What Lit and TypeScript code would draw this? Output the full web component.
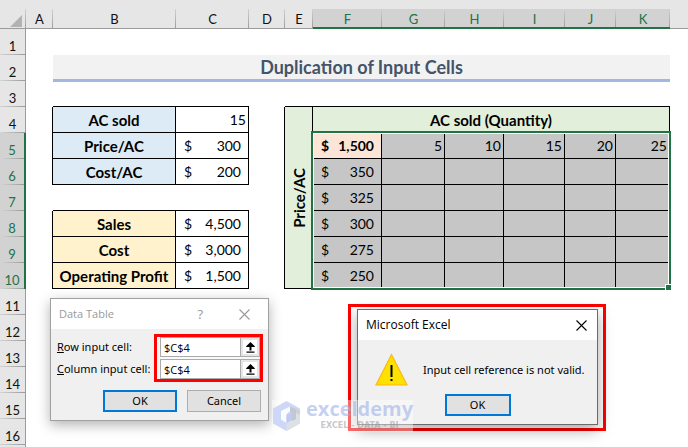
import { LitElement, html, css, svg, nothing } from "lit";
import { customElement, property } from "lit/decorators.js";
import { classMap } from "lit/directives/class-map.js";

type Cell = {
  text?: string;
  money?: boolean;
  fill?: string;
  bold?: boolean;
  align?: string;
  col?: number;
  row?: number;
  box?: boolean;
  title?: boolean;
  turned?: boolean;
};

const COLUMNS = ["A", "B", "C", "D", "E", "F", "G", "H", "I", "J", "K"];
const ROW_COUNT = 16;

const label = (text: string, fill: string): Cell => ({ text, fill, bold: true, box: true });
const money = (text: string, fill = "", bold = false): Cell => ({ text, money: true, fill, bold, box: true });
const right = (text: string, fill = ""): Cell => ({ text, fill, align: "end", box: true });

const CELLS: Record<string, Cell> = {
  B2: { text: "Duplication of Input Cells", col: 10, title: true, bold: true },
  B4: label("AC sold", "blue"),
  C4: right("15"),
  B5: label("Price/AC", "blue"),
  C5: money("300"),
  B6: label("Cost/AC", "blue"),
  C6: money("200"),
  B8: label("Sales", "gold"),
  C8: money("4,500"),
  B9: label("Cost", "gold"),
  C9: money("3,000"),
  B10: label("Operating Profit", "gold"),
  C10: money("1,500"),
  E4: { text: "Price/AC", fill: "green", bold: true, box: true, row: 7, turned: true },
  F4: { text: "AC sold (Quantity)", fill: "green", bold: true, box: true, col: 6 },
  F5: money("1,500", "peach", true),
  F6: money("350", "picked"),
  F7: money("325", "picked"),
  F8: money("300", "picked"),
  F9: money("275", "picked"),
  F10: money("250", "picked"),
};
["5", "10", "15", "20", "25"].forEach((n, i) => {
  const c = "GHIJK"[i];
  CELLS[c + 5] = right(n, "picked");
  for (let r = 6; r <= 10; r++) CELLS[c + r] = right("", "picked");
});

/** Finds the cell that covers a position, merged ranges included. */
function owner(c: number, r: number): string | null {
  for (const [key, cell] of Object.entries(CELLS)) {
    const c0 = COLUMNS.indexOf(key[0]);
    const r0 = Number(key.slice(1));
    if (c >= c0 && c < c0 + (cell.col ?? 1) && r >= r0 && r < r0 + (cell.row ?? 1)) return key;
  }
  return null;
}

const boxed = (c: number, r: number) => {
  const key = owner(c, r);
  return key !== null && !!CELLS[key].box;
};

const cross = html`<svg class="cross" viewBox="0 0 11 11" width="11" height="11" aria-hidden="true">
  <path d="M.5 .5 L10.5 10.5 M10.5 .5 L.5 10.5" fill="none" stroke="currentColor" stroke-width="1.1" />
</svg>`;

const dialogBase = css`
  :host {
    display: block;
    font: 12px/16px "Open Sans", "Noto Sans", sans-serif;
    color: #000;
  }
  .bar {
    display: flex;
    align-items: center;
    height: 30px;
    padding: 0 8px;
    background: #fff;
  }
  .bar h2 {
    flex: 1;
    margin: 0;
    font: inherit;
  }
  button {
    font: inherit;
    color: inherit;
    padding: 0;
    border: 0;
    background: none;
  }
  .cross {
    display: block;
  }
  .push {
    box-sizing: border-box;
    background: #e1e1e1;
    border: 1px solid #adadad;
    height: 22px;
    width: 74px;
    font: 11px/16px "Noto Sans", sans-serif;
  }
  .push.main {
    border: 2px solid #0078d7;
  }
`;

@customElement("sheet-grid")
export class SheetGrid extends LitElement {
  static styles = css`
    :host {
      display: block;
      font: 14px/20px Lato, "Open Sans", sans-serif;
      color: #000;
    }
    table {
      width: 100%;
      table-layout: fixed;
      border-collapse: separate;
      border-spacing: 0;
    }
    .ch { width: 26px; }
    .cA { width: 27px; }
    .cB { width: 123px; }
    .cC { width: 73px; }
    .cD { width: 36px; }
    .cE { width: 28px; }
    .cF { width: 69px; }
    .cG { width: 63px; }
    .cH { width: 59px; }
    .cI { width: 61px; }
    .cJ { width: 51px; }
    .cK { width: 54px; }
    th,
    td {
      box-sizing: border-box;
      padding: 0;
      height: 26px;
      text-align: center;
      white-space: nowrap;
      border: 0 solid #000;
    }
    th {
      font-size: 13px;
      font-weight: 400;
      color: #111;
    }
    thead th {
      height: 20px;
      line-height: 19px;
      box-shadow: inset 0 -1px #9b9b9b;
      background: linear-gradient(#d0d0d0, #9b9b9b) right / 1px 100% no-repeat #e6e6e6;
    }
    thead .rest {
      background: #e6e6e6;
    }
    thead .on {
      color: #217346;
      box-shadow: inset 0 -2px #217346;
      background-color: #d2d2d2;
    }
    .corner svg {
      display: block;
      margin: 3px 0 0 10px;
    }
    tbody th {
      vertical-align: bottom;
      line-height: 18px;
      border-right: 1px solid #9b9b9b;
      background: linear-gradient(to right, #d4d4d4, #9b9b9b) bottom / 100% 1px no-repeat #e6e6e6;
    }
    tbody .on {
      color: #217346;
      border-right: 2px solid #217346;
      background-color: #d2d2d2;
    }
    .lineR { border-right-width: 1px; }
    .lineB { border-bottom-width: 1px; }
    .bold { font-weight: 700; font-size: 15px; }
    .end { text-align: right; padding-right: 2px; }
    .blue { background: #ddebf7; }
    .gold { background: #fff2cc; }
    .green { background: #e2efda; }
    .peach { background: #fce4d6; }
    .picked { background: #c6c6c6; }
    .title {
      font-size: 18px;
      color: #44546a;
      background: #f2f2f2;
      border-bottom: 2px solid #a2b8e1;
      box-shadow: 0 1px #a2b8e1;
    }
    .money {
      display: flex;
      justify-content: space-between;
      padding: 0 7px 0 8px;
      font-size: 14px;
    }
    .turned span {
      display: inline-block;
      vertical-align: middle;
      writing-mode: vertical-rl;
      transform: rotate(180deg);
    }
  `;

  private cell(c: number, r: number) {
    const key = COLUMNS[c] + r;
    const own = owner(c, r);
    if (own !== null && own !== key) return nothing;
    const cell = CELLS[key] ?? {};
    const lastC = c + (cell.col ?? 1) - 1;
    const lastR = r + (cell.row ?? 1) - 1;
    const classes = {
      lineR: !!cell.box || boxed(lastC + 1, r),
      lineB: !cell.title && (!!cell.box || boxed(c, lastR + 1)),
      bold: !!cell.bold,
      end: cell.align === "end",
      title: !!cell.title,
      turned: !!cell.turned,
      ...(cell.fill ? { [cell.fill]: true } : {}),
    };
    const body = cell.money
      ? html`<div class="money"><span>$</span><span>${cell.text}</span></div>`
      : cell.turned
        ? html`<span>${cell.text}</span>`
        : cell.text ?? "";
    return html`<td class=${classMap(classes)} colspan=${cell.col ?? 1} rowspan=${cell.row ?? 1}>${body}</td>`;
  }

  render() {
    const rows = Array.from({ length: ROW_COUNT }, (_, i) => i + 1);
    return html`<table>
      <colgroup>
        <col class="ch" />
        ${COLUMNS.map((c) => html`<col class="c${c}" />`)}
        <col />
      </colgroup>
      <thead>
        <tr>
          <th class="corner">
            <svg width="12" height="12" viewBox="0 0 12 12" aria-hidden="true">
              <path d="M12 0V12H0Z" fill="#b2b2b2" />
            </svg>
          </th>
          ${COLUMNS.map((c) => html`<th scope="col" class=${c >= "F" ? "on" : ""}>${c}</th>`)}
          <th class="rest"></th>
        </tr>
      </thead>
      <tbody>
        ${rows.map(
          (r) => html`<tr>
            <th scope="row" class=${r >= 5 && r <= 10 ? "on" : ""}>${r}</th>
            ${COLUMNS.map((_, c) => this.cell(c, r))}
            <td></td>
          </tr>`
        )}
        <tr>
          <th></th>
          <td colspan="12"></td>
        </tr>
      </tbody>
    </table>`;
  }
}

@customElement("data-table-dialog")
export class DataTableDialog extends LitElement {
  static styles = [
    dialogBase,
    css`
      :host {
        border: 1px solid #a0a0a0;
        background: #f0f0f0;
        box-shadow: 0 4px 12px rgba(0, 0, 0, 0.3);
      }
      .bar {
        color: #999;
        font-size: 11px;
        padding-right: 18px;
      }
      .help {
        margin-right: 36px;
        font-size: 13px;
      }
      .fields {
        display: flex;
        padding: 5px 5px 8px 6px;
      }
      .names {
        flex: 1;
        display: flex;
        flex-direction: column;
        justify-content: center;
        gap: 6px;
        font: 11px/16px "Noto Sans", sans-serif;
        white-space: nowrap;
      }
      .marked {
        display: grid;
        gap: 2px;
        padding-left: 3px;
        border: 3px solid #f00;
        background: #f8f8f8;
      }
      .ref {
        display: flex;
        height: 20px;
      }
      input {
        box-sizing: border-box;
        width: 80px;
        height: 20px;
        padding: 0 3px;
        border: 1px solid #ababab;
        border-right: 0;
        border-radius: 0;
        background: #fff;
        font: inherit;
        font-size: 11px;
        color: inherit;
      }
      .pick {
        display: grid;
        place-items: center;
        box-sizing: border-box;
        width: 20px;
        border: 1px solid #ababab;
        background: #fff;
        box-shadow: inset 0 0 0 2px #e6e6e6;
      }
      .actions {
        display: flex;
        justify-content: flex-end;
        gap: 10px;
        padding: 0 7px 8px;
      }
    `,
  ];

  private field(id: string, name: string) {
    return html`<div class="ref">
      <input id=${id} value="$C$4" />
      <button class="pick" aria-label="Pick ${name} input cell">
        <svg width="9" height="11" viewBox="0 0 9 11" aria-hidden="true">
          <path d="M4.500 0L8.800 4.300V5H5.500V8.500H3.500V5H.2V4.300Z M.5 9.500H8.500V10.700H.5Z" />
        </svg>
      </button>
    </div>`;
  }

  render() {
    return html`
      <div class="bar">
        <h2>Data Table</h2>
        <button class="help" aria-label="Help">?</button>
        <button aria-label="Close">${cross}</button>
      </div>
      <div class="fields">
        <div class="names">
          <label for="row"><u>R</u>ow input cell:</label>
          <label for="column"><u>C</u>olumn input cell:</label>
        </div>
        <div class="marked">${this.field("row", "row")} ${this.field("column", "column")}</div>
      </div>
      <div class="actions">
        <button class="push main">OK</button>
        <button class="push">Cancel</button>
      </div>
    `;
  }
}

@customElement("error-dialog")
export class ErrorDialog extends LitElement {
  @property() message = "";

  static styles = [
    dialogBase,
    css`
      :host {
        border: 1px solid #6b6b6b;
        background: #f0f0f0;
        box-shadow: 0 5px 14px rgba(0, 0, 0, 0.35);
      }
      .bar {
        padding-right: 10px;
      }
      .message {
        display: flex;
        align-items: center;
        gap: 15px;
        padding: 13px 8px 0 17px;
        font: 11px/16px "Noto Sans", sans-serif;
        white-space: nowrap;
      }
      .message svg {
        flex: none;
      }
      .message p {
        margin: 0;
      }
      .actions {
        display: flex;
        justify-content: center;
        padding: 8px 0;
      }
      .push {
        width: 66px;
      }
    `,
  ];

  render() {
    return html`
      <div class="bar">
        <h2>Microsoft Excel</h2>
        <button aria-label="Close">${cross}</button>
      </div>
      <div class="message">
        <svg width="33" height="33" viewBox="0 0 33 33" aria-hidden="true">
          <path d="M16.500 1.500L32 32H1Z" fill="#fde100" stroke="#fdb813" stroke-width="1.200" />
          <path d="M15.500 12H17.500V24H15.500Z M15.500 26H17.500V28H15.500Z" />
        </svg>
        <p>${this.message}</p>
      </div>
      <div class="actions"><button class="push main">OK</button></div>
    `;
  }
}

@customElement("app-root")
export class AppRoot extends LitElement {
  static styles = css`
    :host {
      display: block;
      position: relative;
      height: 100vh;
      overflow: hidden;
      background: #fff;
    }
    .strip {
      height: 9px;
      background: #e6e6e6;
    }
    .selection {
      position: absolute;
      left: 311px;
      top: 131px;
      width: 360px;
      height: 159px;
      box-sizing: border-box;
      border: 2px solid #217346;
      box-shadow: inset 0 0 0 1px #fff;
    }
    .handle {
      position: absolute;
      right: -3px;
      bottom: -3px;
      width: 5px;
      height: 5px;
      background: #217346;
      border: 1px solid #fff;
    }
    .data {
      position: absolute;
      left: 50px;
      top: 298px;
      width: 217px;
    }
    .alert {
      position: absolute;
      left: 348px;
      top: 304px;
      box-sizing: border-box;
      width: 258px;
      padding: 2px 5px 3px 6px;
      border: 3px solid #f00;
    }
    .mark {
      position: absolute;
      left: 272px;
      top: 400px;
      display: flex;
      align-items: center;
      gap: 5px;
      height: 32px;
      background: rgba(255, 255, 255, 0.4);
      white-space: nowrap;
    }
    .words {
      display: flex;
      flex-direction: column;
      align-items: center;
      gap: 2px;
    }
    .brand {
      font: 700 20px/18px "Open Sans", sans-serif;
      color: rgba(160, 178, 232, 0.6);
    }
    .tag {
      font: 700 8px/12px "DejaVu Sans", sans-serif;
      color: rgba(150, 150, 155, 0.55);
    }
  `;

  render() {
    return html`
      <div class="strip"></div>
      <sheet-grid></sheet-grid>
      <div class="selection"><div class="handle"></div></div>
      <data-table-dialog class="data" role="dialog"></data-table-dialog>
      <div class="alert">
        <error-dialog role="alertdialog" message="Input cell reference is not valid."></error-dialog>
      </div>
      <div class="mark">
        <svg width="29" height="32" viewBox="0 0 29 32" aria-hidden="true">
          ${svg`
            <path d="M14.500 1L28 8.500V23.500L14.500 31L1 23.500V8.500Z" fill="#cdd8f8" />
            <path d="M28 8.500V23.500L14.500 31V23L22 19V12Z" fill="#dde1e6" />
            <path d="M18 6.500L28 10V15L22 12L18 10Z" fill="#ccd1d8" />
            <path d="M9 11L18 6.500V11L14.500 14V23L9 19.500Z" fill="#fbfcfe" />
            <path d="M18 6.500L24 9.500V19L20 21V13L18 12Z" fill="#c3c8ce" />
            <path d="M14.500 15L20 12.500V20L14.500 23Z" fill="#bccaf5" />
          `}
        </svg>
        <div class="words">
          <span class="brand">exceldemy</span>
          <span class="tag">EXCEL - DATA - BI</span>
        </div>
      </div>
    `;
  }
}
